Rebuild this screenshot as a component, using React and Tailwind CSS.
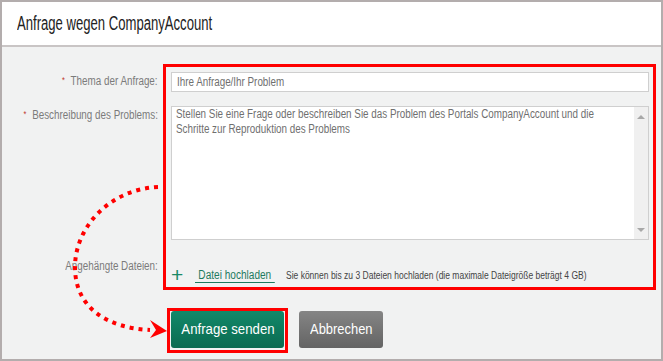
import React from 'react';

const font = { fontFamily: '"Liberation Sans", Arial, sans-serif' };

const Label = ({ children, required, className = '' }) => (
  <div className={`flex justify-end items-start text-[12px] leading-[14px] text-[#7b7b7b] whitespace-nowrap ${className}`}>
    <span className="inline-block origin-right scale-x-[0.82] mr-[1px]">
      {required && <span className="text-[#c0392b] text-[9px] align-[2px] mr-[7px]">*</span>}
      {children}
    </span>
  </div>
);

export default function App() {
  return (
    <div
      className="relative w-[663px] h-[361px] border-2 border-[#b3adad] bg-[#f1f2f2] overflow-hidden"
      style={font}
    >
      {/* Header */}
      <div className="h-[45px] bg-white border-b-2 border-[#c9c5c5] flex items-center pl-[15px] pb-[2px]">
        <h1 className="text-[20px] text-[#222] whitespace-nowrap inline-block origin-left scale-x-[0.655]">
          Anfrage wegen CompanyAccount
        </h1>
      </div>

      {/* Form */}
      <div className="grid grid-cols-[157px_478px] gap-x-[12px] pt-[25px]">
        <Label required className="pt-[1px]">Thema der Anfrage:</Label>
        <div className="h-[20px] bg-white border border-[#cfcfcf] flex items-center pl-[5px] text-[12px] text-[#6f6f6f] whitespace-nowrap">
          <span className="inline-block origin-left scale-x-[0.82]">Ihre Anfrage/Ihr Problem</span>
        </div>

        <Label required className="mt-[14px] pt-[1px]">Beschreibung des Problems:</Label>
        <div className="mt-[14px] h-[134px] bg-white border border-[#cfcfcf] flex overflow-hidden">
          <div className="flex-1 px-[4px] overflow-hidden">
            <div className="w-[548px] origin-top-left scale-x-[0.82] text-[12px] leading-[15px] text-[#6f6f6f]">
              Stellen Sie eine Frage oder beschreiben Sie das Problem des Portals CompanyAccount und die Schritte zur Reproduktion des Problems
            </div>
          </div>
          <div className="w-[14px] bg-[#f0f0f0] flex flex-col items-center justify-between pt-[8px] pb-[7px]">
            <span className="w-0 h-0 border-x-[4px] border-x-transparent border-b-[4px] border-b-[#a8a8a8]" />
            <span className="w-0 h-0 border-x-[4px] border-x-transparent border-t-[4px] border-t-[#a8a8a8]" />
          </div>
        </div>

        <Label className="mt-[19px]">Angehängte Dateien:</Label>
        <div className="mt-[28px] flex items-center h-[14px] whitespace-nowrap">
          <span className="w-[24px] text-[21px] leading-none text-[#1a8a66] -mt-[2px]">+</span>
          <span className="w-[91px] flex">
            <span className="inline-block origin-left scale-x-[0.84] text-[12px] text-[#1d7a5f] border-b border-[#1d7a5f] px-[4px] leading-[14px]">
              Datei hochladen
            </span>
          </span>
          <span className="inline-block origin-left scale-x-[0.85] text-[10px] text-[#444] mt-[1px]">
            Sie können bis zu 3 Dateien hochladen (die maximale Dateigröße beträgt 4 GB)
          </span>
        </div>

        <div />
        <div className="mt-[29px] flex gap-[15px]">
          <button className="w-[113px] h-[37px] rounded-[3px] bg-gradient-to-b from-[#12896a] to-[#0b6b51] text-white text-[15px] whitespace-nowrap">
            <span className="inline-block scale-x-[0.88]">Anfrage senden</span>
          </button>
          <button className="w-[84px] h-[37px] rounded-[3px] bg-gradient-to-b from-[#858585] to-[#646464] text-white text-[15px] whitespace-nowrap">
            <span className="inline-block scale-x-[0.86]">Abbrechen</span>
          </button>
        </div>
      </div>

      {/* Annotation overlays */}
      <div className="absolute left-[161px] top-[62px] w-[493px] h-[226px] border-[3px] border-[#ff0000] pointer-events-none" />
      <div className="absolute left-[165px] top-[306px] w-[121px] h-[45px] border-[3px] border-[#ff0000] pointer-events-none" />
      <svg className="absolute left-0 top-0 pointer-events-none" width="663" height="361">
        <path
          d="M156,185 C108,187 73,225 73,265 C73,308 108,326 148,328"
          fill="none"
          stroke="#ff0000"
          strokeWidth="4"
          strokeDasharray="4 5"
        />
        <path d="M148,318 L165,329 L148,336 L154,328 Z" fill="#ff0000" />
      </svg>
    </div>
  );
}
